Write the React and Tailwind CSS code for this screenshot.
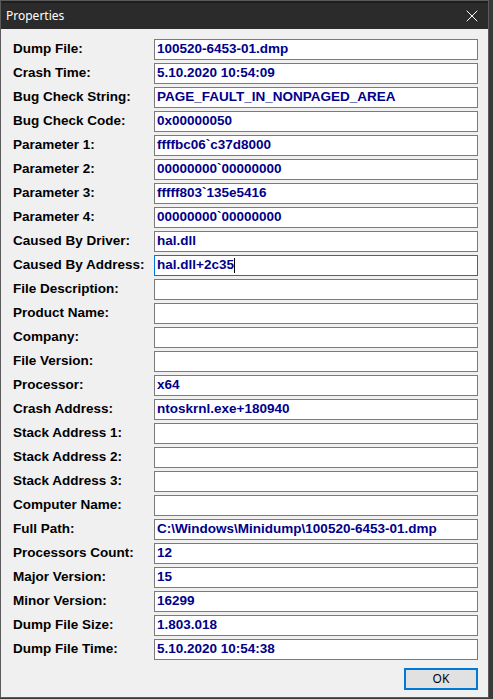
import { X } from "lucide-react";

const rows = [
  ["Dump File:", "100520-6453-01.dmp"],
  ["Crash Time:", "5.10.2020 10:54:09"],
  ["Bug Check String:", "PAGE_FAULT_IN_NONPAGED_AREA"],
  ["Bug Check Code:", "0x00000050"],
  ["Parameter 1:", "ffffbc06`c37d8000"],
  ["Parameter 2:", "00000000`00000000"],
  ["Parameter 3:", "fffff803`135e5416"],
  ["Parameter 4:", "00000000`00000000"],
  ["Caused By Driver:", "hal.dll"],
  ["Caused By Address:", "hal.dll+2c35", true],
  ["File Description:", ""],
  ["Product Name:", ""],
  ["Company:", ""],
  ["File Version:", ""],
  ["Processor:", "x64"],
  ["Crash Address:", "ntoskrnl.exe+180940"],
  ["Stack Address 1:", ""],
  ["Stack Address 2:", ""],
  ["Stack Address 3:", ""],
  ["Computer Name:", ""],
  ["Full Path:", "C:\\Windows\\Minidump\\100520-6453-01.dmp"],
  ["Processors Count:", "12"],
  ["Major Version:", "15"],
  ["Minor Version:", "16299"],
  ["Dump File Size:", "1.803.018"],
  ["Dump File Time:", "5.10.2020 10:54:38"],
];

export default function App() {
  return (
    <div className="w-[493px] h-[699px] bg-[#3a3a3a] flex font-['Liberation_Sans',sans-serif]">
      <div className="w-[489px] h-[698px] flex flex-col bg-[#f0f0f0] border border-[#5a5a5a]">
        <div className="h-[28px] bg-[#2b2b2b] flex items-center justify-between pl-[5px] pr-[6px] border-t-2 border-[#1e1e1e]">
          <span className="text-white text-[12px] font-['Noto_Sans',sans-serif]">Properties</span>
          <X className="w-[20px] h-[20px] text-white" strokeWidth={1.2} />
        </div>
        <div className="flex flex-col gap-[3px] pt-[10px] pl-[12px] pr-[10px]">
          {rows.map(([label, value, focused]) => (
            <div key={label} className="flex items-center h-[21px]">
              <span className="w-[141px] text-[13.5px] font-bold text-black">{label}</span>
              <div
                className={
                  "flex-1 h-[21px] bg-white flex items-center pl-[2px] text-[13.5px] font-bold text-[#00008b] " +
                  (focused ? "border border-[#0078d7]" : "border border-[#7a7a7a]")
                }
              >
                {value}
                {focused && <span className="w-px h-[15px] bg-black" />}
              </div>
            </div>
          ))}
        </div>
        <div className="flex justify-end pr-[10px] pt-[8px]">
          <button className="w-[74px] h-[22px] bg-[#e1e1e1] border-2 border-[#0078d7] text-[12px] text-black font-['Noto_Sans',sans-serif]">
            OK
          </button>
        </div>
      </div>
    </div>
  );
}
